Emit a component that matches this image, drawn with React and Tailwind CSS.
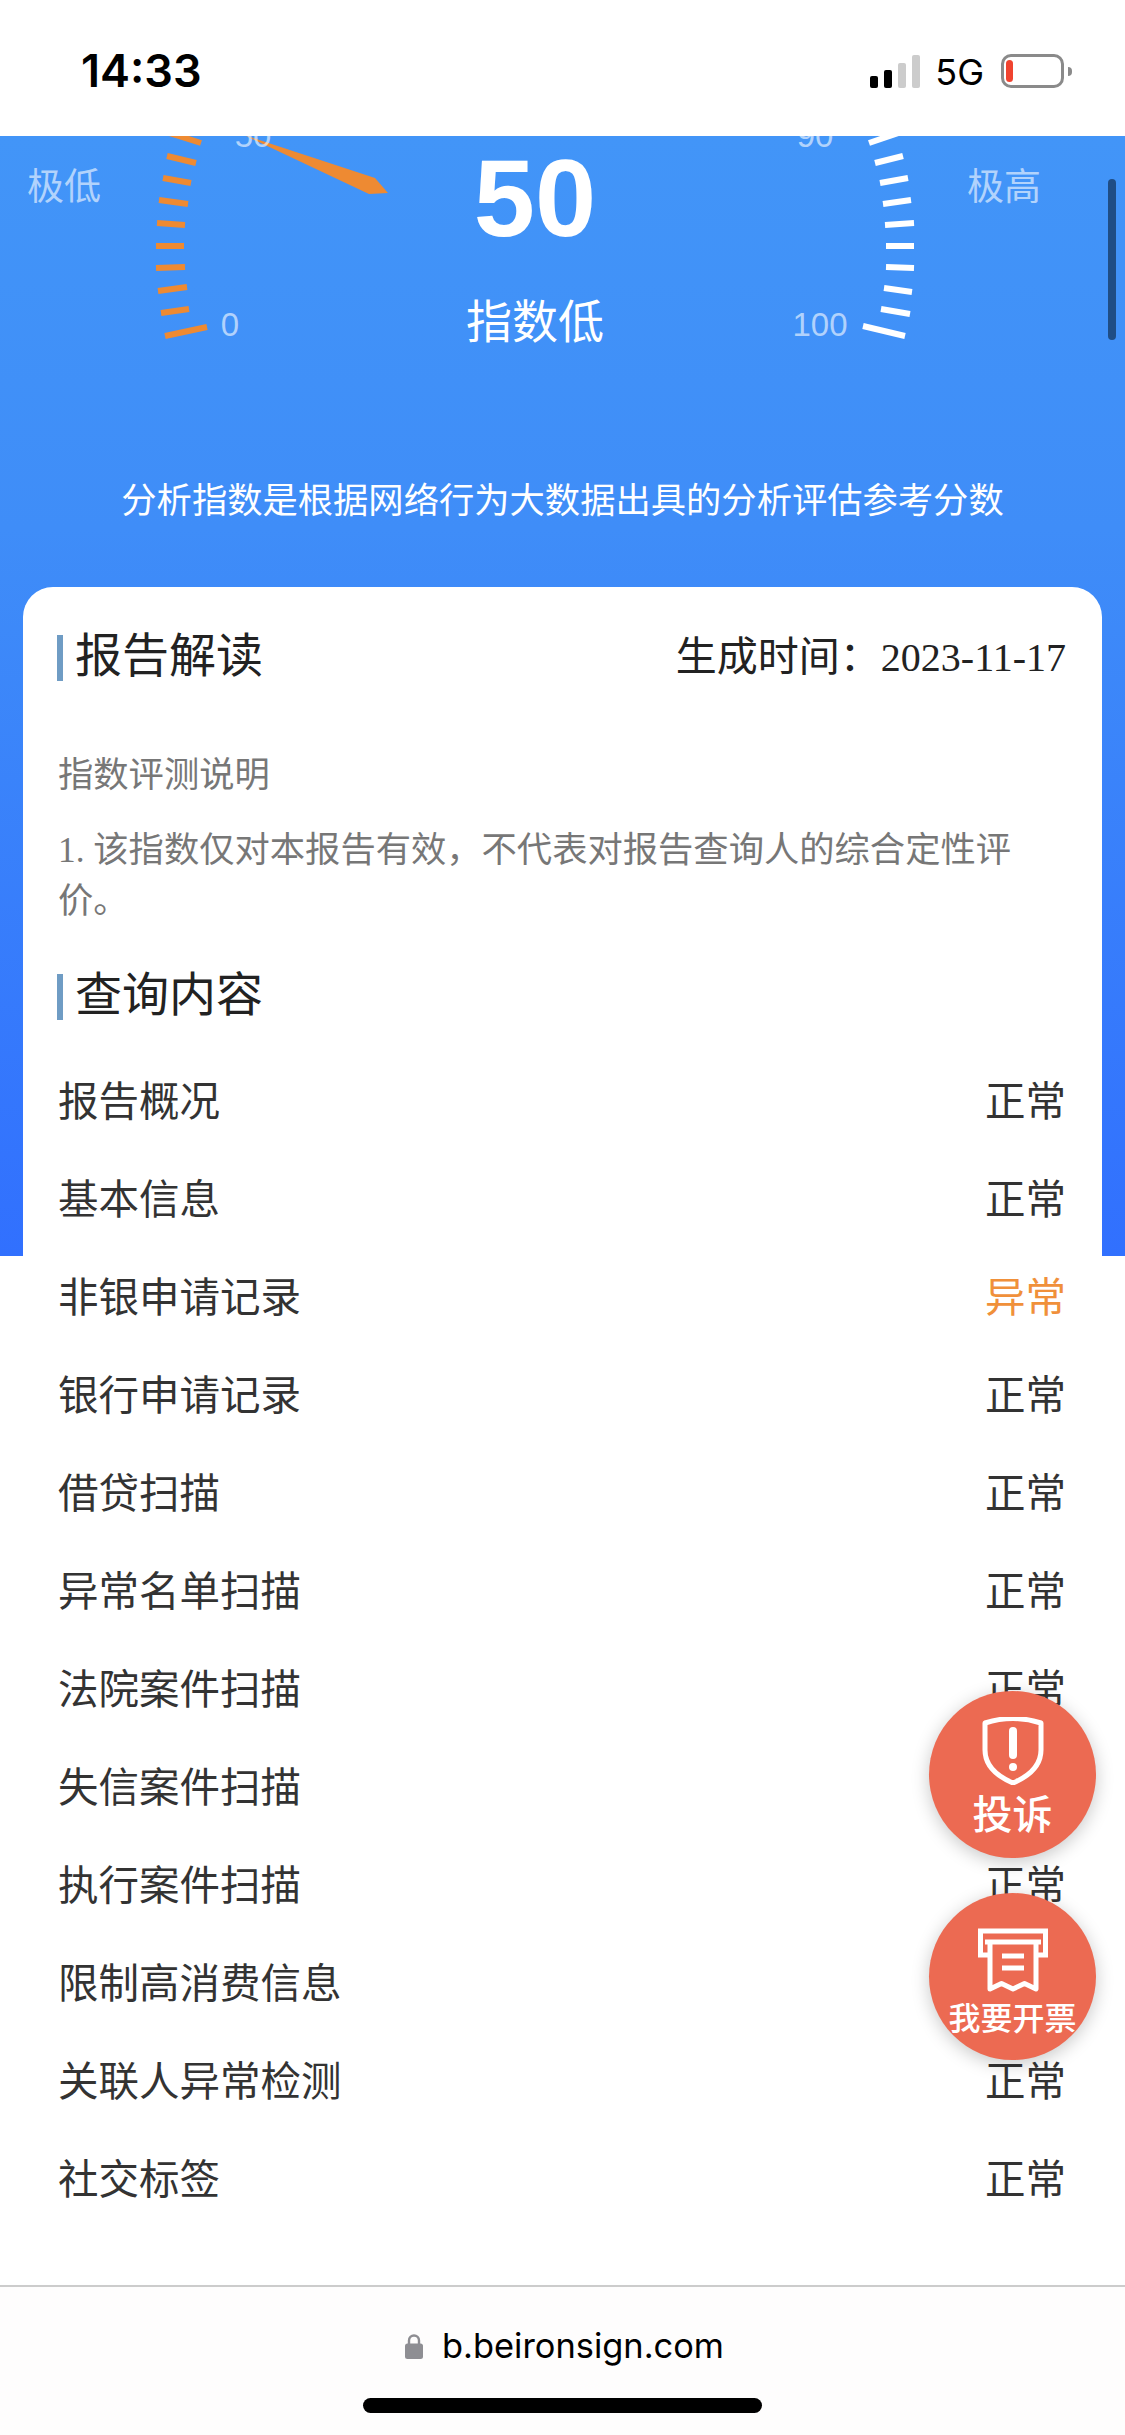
const rows = [
  ['报告概况', '正常'], ['基本信息', '正常'], ['非银申请记录', '异常'], ['银行申请记录', '正常'],
  ['借贷扫描', '正常'], ['异常名单扫描', '正常'], ['法院案件扫描', '正常'], ['失信案件扫描', '正常'],
  ['执行案件扫描', '正常'], ['限制高消费信息', '正常'], ['关联人异常检测', '正常'], ['社交标签', '正常'],
];
const leftTicks = [
  [165,336,207,327],[161,313,189,309],[158,291,187,287],[156,268,185,267],[156,246,184,246],
  [157,223,185,225],[159,200,188,204],[163,178,191,183],[167,156,196,163],[160,130,201,143],
];
const rightTicks = [
  [863,326,905,336],[881,309,910,314],[884,288,912,292],[886,267,914,268],[886,246,914,246],
  [885,225,914,223],[883,204,911,200],[880,183,908,178],[875,163,903,156],[869,143,910,129],
];
const sans = { fontFamily: '"Noto Sans CJK SC", sans-serif' };
const serif = { fontFamily: '"Liberation Serif", "Noto Sans CJK SC", serif' };

function Gauge() {
  return (
    <svg viewBox="0 136 1125 270" className="block w-[1125px] h-[270px]" style={sans}>
      {leftTicks.map((t, i) => <line key={i} x1={t[0]} y1={t[1]} x2={t[2]} y2={t[3]} stroke="#ee8a32" strokeWidth="6" />)}
      {rightTicks.map((t, i) => <line key={i} x1={t[0]} y1={t[1]} x2={t[2]} y2={t[3]} stroke="#ffffff" strokeWidth="6" />)}
      <polygon points="244,135 375,178 388,193 369,194" fill="#ee8a32" />
      <g fill="#ffffff" fillOpacity="0.6" fontSize="33" textAnchor="middle" style={{ fontFamily: '"Liberation Sans", sans-serif' }}>
        <text x="230" y="336">0</text>
        <text x="820" y="336">100</text>
        <text x="253" y="147">50</text>
        <text x="815" y="147">90</text>
      </g>
      <g fill="#ffffff" fillOpacity="0.6" fontSize="37" textAnchor="middle">
        <text x="64" y="200">极低</text>
        <text x="1004" y="200">极高</text>
      </g>
      <text x="535" y="236" fill="#ffffff" fontSize="110" fontWeight="700" textAnchor="middle" style={{ fontFamily: '"Liberation Sans", sans-serif' }}>50</text>
      <text x="535" y="338" fill="#ffffff" fontSize="46" textAnchor="middle">指数低</text>
    </svg>
  );
}

function Heading({ children }) {
  return (
    <div className="h-[46px] border-l-[6px] border-[#6f9cc4] pl-[12px] text-[47px] leading-[34px] text-[#222222]">{children}</div>
  );
}

function Fab({ children, className }) {
  return (
    <div className={`absolute left-[929px] w-[167px] h-[167px] rounded-full bg-[#ec6a52] shadow-[0_4px_18px_rgba(0,0,0,0.22)] flex flex-col items-center text-white font-medium ${className}`}>
      {children}
    </div>
  );
}

export default function App() {
  return (
    <div className="relative w-[1125px] h-[2435px] overflow-hidden bg-white flex flex-col" style={sans}>
      <div className="h-[136px] shrink-0 bg-white relative z-10 flex items-start justify-between pl-[81px] pr-[53px]">
        <div className="mt-[44px] text-[45px] leading-[54px] font-semibold text-black" style={{ fontFamily: 'Inter, sans-serif' }}>14:33</div>
        <div className="mt-[54px] flex items-start">
          <div className="h-[34px] flex items-end gap-[6px]">
            <div className="w-[8px] h-[12px] rounded-[2px] bg-black" />
            <div className="w-[8px] h-[18px] rounded-[2px] bg-black" />
            <div className="w-[8px] h-[25px] rounded-[2px] bg-[#cccccc]" />
            <div className="w-[8px] h-[33px] rounded-[2px] bg-[#cccccc]" />
          </div>
          <div className="ml-[15px] h-[34px] text-[36px] leading-[36px] text-black" style={{ fontFamily: 'Inter, sans-serif' }}>5G</div>
          <div className="ml-[17px] w-[63px] h-[34px] rounded-[10px] border-[3px] border-[#8a8a8a] flex items-center pl-[2px]">
            <div className="w-[7px] h-[22px] rounded-[4px] bg-[#f0432f]" />
          </div>
          <div className="ml-[4px] mt-[13px] w-[4px] h-[9px] rounded-r-[4px] bg-[#8a8a8a]" />
        </div>
      </div>

      <div className="flex-1 bg-no-repeat bg-[length:100%_1120px] bg-[linear-gradient(180deg,#4295f8_0%,#3f8df8_35%,#3170fe_100%)]">
        <Gauge />
        <div className="h-[181px] pt-[69px] text-center text-[35.3px] leading-[46px] text-white">分析指数是根据网络行为大数据出具的分析评估参考分数</div>
        <div className="mx-[23px] rounded-t-[30px] bg-white pl-[34px] pr-[36px] pt-[47px]">
          <div className="flex items-center justify-between">
            <Heading>报告解读</Heading>
            <div className="text-[41px] leading-[46px] text-[#222222]" style={serif}>生成时间：<span className="text-[40px]">2023-11-17</span></div>
          </div>
          <div className="mt-[68px] pl-[1px] text-[35.3px] leading-[46px] text-[#777777]">指数评测说明</div>
          <p className="mt-[30px] pl-[1px] text-[35.3px] leading-[51px] text-[#777777]" style={serif}>1. 该指数仅对本报告有效，不代表对报告查询人的综合定性评价。</p>
          <div className="mt-[47px]"><Heading>查询内容</Heading></div>
          <div className="mt-[30px] pl-[1px]">
            {rows.map(([name, status]) => (
              <div key={name} className="h-[98px] flex items-center justify-between text-[40.5px] text-[#333333]">
                <span>{name}</span>
                <span className={status === '异常' ? 'text-[#f0903a]' : ''}>{status}</span>
              </div>
            ))}
          </div>
        </div>
      </div>

      <div className="h-[150px] shrink-0 bg-[#fefdfd] border-t-2 border-[#cccccc] relative z-10 flex flex-col items-center">
        <div className="mt-[36px] h-[46px] pl-[4px] flex items-center">
          <svg viewBox="0 0 18 26" className="w-[18px] h-[26px]" fill="#8e8e93">
            <path d="M4 11V7.5a5 5 0 0 1 10 0V11" fill="none" stroke="#8e8e93" strokeWidth="2.4" />
            <rect x="0" y="10.5" width="18" height="15.5" rx="2.5" />
          </svg>
          <span className="ml-[19px] text-[34.4px] leading-[46px] text-black" style={{ fontFamily: 'Inter, sans-serif' }}>b.beironsign.com</span>
        </div>
        <div className="mt-[29px] w-[399px] h-[15px] rounded-full bg-black" />
      </div>

      <div className="absolute left-[1108px] top-[179px] z-20 w-[8px] h-[161px] rounded-full bg-[#1f4d85]" />

      <Fab className="top-[1691px] z-20 pt-[26px]">
        <svg viewBox="982 1717 62 68" className="w-[62px] h-[68px]" fill="none" stroke="#ffffff" strokeWidth="5" strokeLinejoin="round">
          <path d="M985 1723 Q1013 1714 1041 1723 V1750 Q1041 1771 1013 1783 Q985 1771 985 1750 Z" />
          <line x1="1013" y1="1731" x2="1013" y2="1755" strokeWidth="8" strokeLinecap="round" />
          <circle cx="1013" cy="1767" r="4" fill="#ffffff" stroke="none" />
        </svg>
        <div className="mt-[7px] text-[40px] leading-[40px]">投诉</div>
      </Fab>

      <Fab className="top-[1893px] z-20 pt-[35px]">
        <svg viewBox="978 1928 70 65" className="w-[70px] h-[65px]" fill="none" stroke="#ffffff" strokeWidth="5">
          <path d="M989 1955 H980.5 V1931 H1045.5 V1955 H1037" />
          <path d="M985 1942 H1041" />
          <path d="M990 1942 V1989 L1001.5 1983.5 L1013 1989 L1024.5 1983.5 L1036 1989 V1942" strokeLinejoin="round" />
          <path d="M1002 1956 H1024 M1002 1968 H1024" />
        </svg>
        <div className="mt-[7px] text-[32px] leading-[32px] whitespace-nowrap">我要开票</div>
      </Fab>
    </div>
  );
}
